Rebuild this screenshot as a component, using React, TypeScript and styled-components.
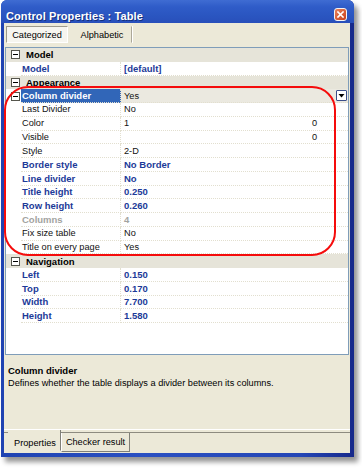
import styled, { createGlobalStyle } from 'styled-components'

const GlobalStyle = createGlobalStyle`
  html, body {
    margin: 0;
    padding: 0;
    background: #fff;
  }
  body {
    font-family: "Liberation Sans", Arial, sans-serif;
  }
`

type Tone = 'bold' | 'normal' | 'disabled'

type Item =
    | { kind: 'cat', label: string }
    | { kind: 'prop', name: string, value: string, tone: Tone, valueTone?: Tone, extra?: string, selected?: boolean }

const ROW_H = 13.75

const items: Item[] = [
    { kind: 'cat', label: 'Model' },
    { kind: 'prop', name: 'Model', value: '[default]', tone: 'bold' },
    { kind: 'cat', label: 'Appearance' },
    { kind: 'prop', name: 'Column divider', value: 'Yes', tone: 'bold', valueTone: 'normal', selected: true },
    { kind: 'prop', name: 'Last Divider', value: 'No', tone: 'normal' },
    { kind: 'prop', name: 'Color', value: '1', tone: 'normal', extra: '0' },
    { kind: 'prop', name: 'Visible', value: '', tone: 'normal', extra: '0' },
    { kind: 'prop', name: 'Style', value: '2-D', tone: 'normal' },
    { kind: 'prop', name: 'Border style', value: 'No Border', tone: 'bold' },
    { kind: 'prop', name: 'Line divider', value: 'No', tone: 'bold' },
    { kind: 'prop', name: 'Title height', value: '0.250', tone: 'bold' },
    { kind: 'prop', name: 'Row height', value: '0.260', tone: 'bold' },
    { kind: 'prop', name: 'Columns', value: '4', tone: 'disabled' },
    { kind: 'prop', name: 'Fix size table', value: 'No', tone: 'normal' },
    { kind: 'prop', name: 'Title on every page', value: 'Yes', tone: 'normal' },
    { kind: 'cat', label: 'Navigation' },
    { kind: 'prop', name: 'Left', value: '0.150', tone: 'bold' },
    { kind: 'prop', name: 'Top', value: '0.170', tone: 'bold' },
    { kind: 'prop', name: 'Width', value: '7.700', tone: 'bold' },
    { kind: 'prop', name: 'Height', value: '1.580', tone: 'bold' },
]

const Page = styled.div`
    position: relative;
    width: 362px;
    height: 468px;
    padding-left: 1px;
    box-sizing: border-box;
    overflow: hidden;
`
const Window = styled.div`
    width: 353px;
    height: 457px;
    display: flex;
    flex-direction: column;
    background: linear-gradient(to right, #1f43b2 0%, #2a50c2 40%, #2446b6 85%, #16288a 100%);
    border-radius: 6px 6px 0 0;
    box-shadow: 4px 5px 5px rgba(0, 0, 0, .42);
`
const TitleBar = styled.div`
    height: 23px;
    flex-shrink: 0;
    display: flex;
    align-items: center;
    justify-content: space-between;
    padding: 6px 7px 0 5px;
    box-sizing: border-box;
    border-radius: 6px 6px 0 0;
    background: linear-gradient(to bottom, #3f6cd2 0%, #2f5cc8 30%, #2a55c0 70%, #284fba 100%);
`
const TitleText = styled.span`
    color: #fff;
    font-weight: 700;
    font-size: 11px;
    padding-top: 2px;
    text-shadow: 1px 1px 0 #14307e;
    letter-spacing: .1px;
`
const CloseButton = styled.div`
    width: 13px;
    height: 13px;
    box-sizing: border-box;
    border: 1px solid #f4f4f4;
    border-radius: 3px;
    background: linear-gradient(135deg, #e8825a, #c8401c);
    display: flex;
    align-items: center;
    justify-content: center;
`
const Body = styled.div`
    flex: 1;
    display: flex;
    flex-direction: column;
    margin: 0 4px 4px 3px;
    background: #ece9d8;
    min-height: 0;
`
const Toolbar = styled.div`
    height: 24px;
    flex-shrink: 0;
    display: flex;
    align-items: flex-start;
    padding: 3px 0 0 2px;
    box-sizing: border-box;
    gap: 4px;
`
const ToolButton = styled.div<{ $pressed?: boolean }>`
    height: 17px;
    width: ${p => p.$pressed ? 62 : 60}px;
    box-sizing: border-box;
    display: flex;
    align-items: center;
    justify-content: center;
    font-size: 9.2px;
    color: #000;
    background: ${p => p.$pressed ? '#f6f5ef' : 'transparent'};
    border: 1px solid ${p => p.$pressed ? '#9d9a8c' : 'transparent'};
    border-right-color: ${p => p.$pressed ? '#fff' : '#aca899'};
    border-bottom-color: ${p => p.$pressed ? '#fff' : 'transparent'};
    box-shadow: ${p => p.$pressed ? 'none' : '1px 0 0 #fff'};
`
const Grid = styled.div`
    height: 308px;
    flex-shrink: 0;
    margin: 0 1px;
    border: 1px solid #7f9db9;
    background: #fff;
    box-sizing: border-box;
    overflow: hidden;
`
const CatRow = styled.div`
    height: ${ROW_H}px;
    display: flex;
    align-items: center;
    background: #e6e4d9;
    font-size: 9.5px;
    font-weight: 700;
    color: #000;
`
const ExpandBox = styled.div`
    width: 9px;
    height: 9px;
    margin: 0 6px 0 5px;
    box-sizing: border-box;
    border: 1px solid #55554d;
    background: #fff;
    display: flex;
    align-items: center;
    justify-content: center;
    flex-shrink: 0;

    &::after {
        content: '';
        width: 5px;
        height: 1px;
        background: #000;
    }
`
const Margin = styled.div`
    width: 15px;
    flex-shrink: 0;
    display: flex;
    align-items: center;
`
const PropRow = styled.div`
    height: ${ROW_H}px;
    display: flex;
    align-items: stretch;
`
const toneColor = (tone: Tone) =>
    tone === 'bold' ? '#1c3a98' : tone === 'disabled' ? '#a3a3a0' : '#111'

const NameCell = styled.div<{ $tone: Tone, $selected?: boolean }>`
    width: 100px;
    flex-shrink: 0;
    box-sizing: border-box;
    padding-left: 1px;
    display: flex;
    align-items: center;
    white-space: nowrap;
    font-size: ${p => p.$tone === 'normal' ? 9.2 : 9.5}px;
    font-weight: ${p => p.$tone === 'normal' ? 400 : 700};
    color: ${p => p.$selected ? '#fff' : toneColor(p.$tone)};
    background: ${p => p.$selected ? '#3166b8' : 'transparent'};
    border-bottom: 1px dotted #e2dfcf;
    border-right: 1px dotted #e2dfcf;
`
const ValueCell = styled.div<{ $tone: Tone, $selected?: boolean }>`
    flex: 1;
    box-sizing: border-box;
    padding: 0 1px 0 3px;
    display: flex;
    align-items: center;
    white-space: nowrap;
    font-size: ${p => p.$tone === 'normal' ? 9.2 : 9.5}px;
    font-weight: ${p => p.$tone === 'normal' ? 400 : 700};
    color: ${p => toneColor(p.$tone)};
    background: ${p => p.$selected ? '#ebe9e0' : 'transparent'};
    border-bottom: 1px dotted #e2dfcf;
`
const Extra = styled.span`
    margin-left: auto;
    margin-right: 30px;
`
const DropButton = styled.div`
    margin-left: auto;
    width: 11px;
    height: 11px;
    box-sizing: border-box;
    border: 1px solid #3b4f8a;
    border-radius: 1px;
    background: #fff;
    display: flex;
    align-items: center;
    justify-content: center;
`
const Description = styled.div`
    height: 74px;
    flex-shrink: 0;
    padding: 10px 0 0 4px;
    box-sizing: border-box;
    font-size: 9.2px;
    line-height: 12px;
    color: #000;
`
const DescTitle = styled.div`
    font-weight: 700;
    font-size: 9.5px;
`
const TabStrip = styled.div`
    flex: 1;
    display: flex;
    align-items: flex-start;
    padding: 3px 0 0 4px;
    border-top: 1px solid #fff;
    box-shadow: inset 0 2px 0 #ece9d8, inset 0 3px 0 #8d8b80;
`
const BottomTab = styled.div<{ $active?: boolean }>`
    font-size: 9.2px;
    color: #000;
    box-sizing: border-box;
    height: ${p => p.$active ? 21 : 19}px;
    display: flex;
    align-items: ${p => p.$active ? 'flex-end' : 'center'};
    padding: ${p => p.$active ? '0 4px 2px 5px' : '0 4px 0 4px'};
    margin-top: ${p => p.$active ? -3 : 0}px;
    background: #ece9d8;
    border-left: 1px solid ${p => p.$active ? 'transparent' : '#fff'};
    border-right: 1px solid #808078;
    border-bottom: 1px solid ${p => p.$active ? 'transparent' : '#808078'};
`
const Annotation = styled.div`
    position: absolute;
    left: 4px;
    top: 86px;
    width: 332px;
    height: 170px;
    box-sizing: border-box;
    border: 2px solid #f50c0c;
    border-radius: 24px;
    pointer-events: none;
`

export default function App() {
    return (
        <Page>
            <GlobalStyle />
            <Window>
                <TitleBar>
                    <TitleText>Control Properties : Table</TitleText>
                    <CloseButton>
                        <svg width="7" height="7" viewBox="0 0 7 7">
                            <path d="M1 1 L6 6 M6 1 L1 6" stroke="#fff" strokeWidth="1.6" strokeLinecap="square" />
                        </svg>
                    </CloseButton>
                </TitleBar>
                <Body>
                    <Toolbar>
                        <ToolButton $pressed>Categorized</ToolButton>
                        <ToolButton>Alphabetic</ToolButton>
                    </Toolbar>
                    <Grid>
                        {items.map((it, i) => it.kind === 'cat' ? (
                            <CatRow key={i}>
                                <ExpandBox />
                                {it.label}
                            </CatRow>
                        ) : (
                            <PropRow key={i}>
                                <Margin>{it.selected && <ExpandBox />}</Margin>
                                <NameCell $tone={it.tone} $selected={it.selected}>{it.name}</NameCell>
                                <ValueCell $tone={it.valueTone ?? it.tone} $selected={it.selected}>
                                    {it.value}
                                    {it.extra && <Extra>{it.extra}</Extra>}
                                    {it.selected && (
                                        <DropButton>
                                            <svg width="7" height="6" viewBox="0 0 7 6">
                                                <path d="M0.5 1 H6.5 L3.5 4.5 Z" fill="#000" />
                                            </svg>
                                        </DropButton>
                                    )}
                                </ValueCell>
                            </PropRow>
                        ))}
                    </Grid>
                    <Description>
                        <DescTitle>Column divider</DescTitle>
                        Defines whether the table displays a divider between its columns.
                    </Description>
                    <TabStrip>
                        <BottomTab $active>Properties</BottomTab>
                        <BottomTab>Checker result</BottomTab>
                    </TabStrip>
                </Body>
            </Window>
            <Annotation />
        </Page>
    )
}
